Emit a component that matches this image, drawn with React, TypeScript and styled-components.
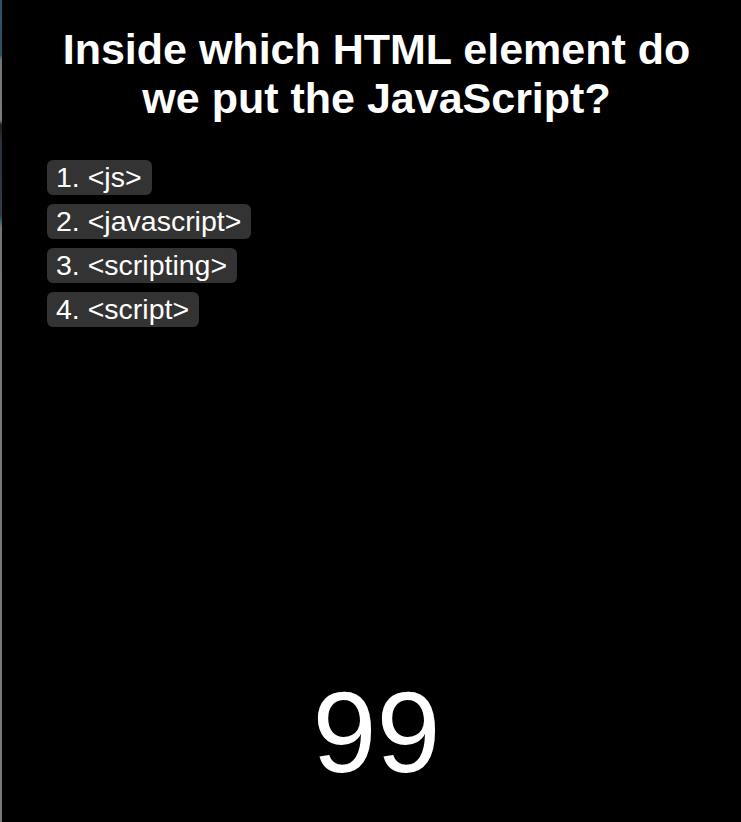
import React from 'react';
import styled, { createGlobalStyle } from 'styled-components';

const GlobalStyle = createGlobalStyle`
    html, body {
        margin: 0;
        padding: 0;
        background: #000;
    }
    body {
        font-family: 'Liberation Sans', Arial, sans-serif;
        color: #fff;
    }
`;

const Frame = styled.div`
    display: flex;
    min-height: 100vh;
`;

// thin sliver of the window behind, visible on the left edge
const EdgeStrip = styled.div`
    width: 2px;
    flex: none;
    background: linear-gradient(
        to bottom,
        #2a5566 0px,
        #2d5262 55px,
        #6f7479 60px,
        #7a7d82 120px,
        #1a1f24 125px,
        #2b3138 140px,
        #333a42 215px,
        #3a6a72 222px,
        #777579 228px,
        #7b787e 100%
    );
`;

const Panel = styled.main`
    flex: 1;
    display: flex;
    flex-direction: column;
    padding-left: 10px;
    background: #000;
`;

const Question = styled.h1`
    margin: 25px 0 0;
    font-size: 43px;
    line-height: 49px;
    font-weight: bold;
    text-align: center;
`;

const AnswerList = styled.ol`
    list-style: none;
    margin: 37px 0 0;
    padding: 0 0 0 35px;
    display: flex;
    flex-direction: column;
    align-items: flex-start;
    gap: 9px;
`;

const Answer = styled.li`
    background: #333;
    border-radius: 6px;
    padding: 1px 10px 1px 9px;
    font-size: 28.5px;
    line-height: 33px;
    cursor: pointer;
`;

const Timer = styled.div`
    margin-top: auto;
    padding-bottom: 24px;
    text-align: center;
    font-size: 115px;
    line-height: normal;
`;

const answers = ['<js>', '<javascript>', '<scripting>', '<script>'];

export default function App() {
    return (
        <>
            <GlobalStyle />
            <Frame>
                <EdgeStrip />
                <Panel>
                    <Question>
                        Inside which HTML element do
                        <br />
                        we put the JavaScript?
                    </Question>
                    <AnswerList>
                        {answers.map((answer, i) => (
                            <Answer key={answer}>
                                {i + 1}. {answer}
                            </Answer>
                        ))}
                    </AnswerList>
                    <Timer>99</Timer>
                </Panel>
            </Frame>
        </>
    );
}
